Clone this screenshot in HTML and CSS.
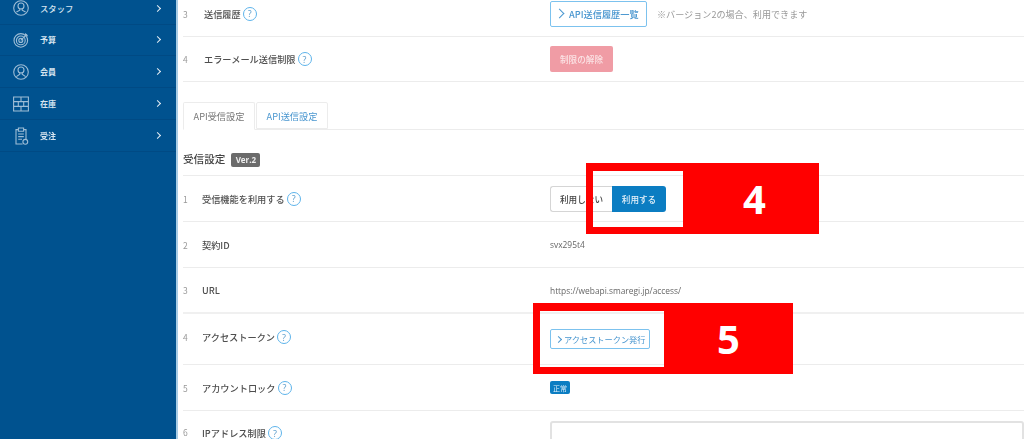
FILE: index.html
```html
<!DOCTYPE html>
<html lang="ja">
<head>
<meta charset="utf-8">
<title>API設定</title>
<link rel="stylesheet" href="styles.css">
</head>
<body>
<div class="page">
  <nav class="sidebar">
    <a class="nav-item nav-first">
      <svg class="nav-icon" viewBox="0 0 16 16"><circle cx="8" cy="8" r="7.3"/><circle cx="8" cy="6" r="3"/><path d="M6.8 8.800v1.400L3.400 12M9.200 8.800v1.400l3.400 1.800"/></svg>
      <span class="nav-text nav-wide">スタッフ</span><span class="nav-arrow"></span>
    </a>
    <a class="nav-item">
      <svg class="nav-icon" viewBox="0 0 16 16"><circle cx="7.800" cy="8.400" r="6.800"/><circle cx="7.800" cy="8.400" r="4.400"/><circle cx="7.800" cy="8.400" r="2"/><path d="M7.800 8.400l6.200-6.200M12.400 1.400l.3 2.200 2.200.3"/></svg>
      <span class="nav-text">予算</span><span class="nav-arrow"></span>
    </a>
    <a class="nav-item">
      <svg class="nav-icon" viewBox="0 0 16 16"><circle cx="8" cy="8" r="7.300"/><circle cx="8" cy="6" r="3"/><path d="M6.800 8.800v1.400L3.400 12.600M9.200 8.800v1.400l3.400 2.400"/></svg>
      <span class="nav-text">会員</span><span class="nav-arrow"></span>
    </a>
    <a class="nav-item">
      <svg class="nav-icon" viewBox="0 0 16 16"><path d="M.6 1h14.800v14H.6zM.6 5.600h14.800M.6 10.400h14.800M8 1v4.600M8 10.400V15M5.300 5.600v4.800M10.700 5.600v4.800"/></svg>
      <span class="nav-text">在庫</span><span class="nav-arrow"></span>
    </a>
    <a class="nav-item">
      <svg class="nav-icon nav-icon-tall" viewBox="0 0 16 18"><path d="M9.600 17H3V2.600h2.400M10.600 2.600H13v9.400M5.400 1h5.200v3.200H5.400zM5.200 7h5.600M5.200 9.600h5.600M5.200 12.200h3.800"/><circle cx="12.300" cy="14.800" r="2.400"/></svg>
      <span class="nav-text">受注</span><span class="nav-arrow"></span>
    </a>
  </nav>

  <main class="main">
    <div class="row row-top">
      <span class="num">3</span>
      <span class="label label-wide">送信履歴<i class="help">?</i></span>
      <div class="value"><a class="btn-link btn-large"><span class="chev"></span>API送信履歴一覧</a><span class="note">※バージョン2の場合、利用できます</span></div>
    </div>
    <div class="row row-44">
      <span class="num">4</span>
      <span class="label label-wide">エラーメール送信制限<i class="help">?</i></span>
      <div class="value"><a class="btn-danger">制限の解除</a></div>
    </div>

    <div class="tabs">
      <a class="tab tab-active">API受信設定</a>
      <a class="tab">API送信設定</a>
    </div>

    <div class="section-head">
      <h2 class="section-title">受信設定</h2><span class="ver">Ver.2</span>
    </div>

    <div class="row">
      <span class="num">1</span>
      <span class="label">受信機能を利用する<i class="help">?</i></span>
      <div class="value">
        <div class="toggle"><a class="toggle-off">利用しない</a><a class="toggle-on">利用する</a></div>
      </div>
    </div>
    <div class="row">
      <span class="num">2</span>
      <span class="label">契約ID</span>
      <div class="value plain">svx295t4</div>
    </div>
    <div class="row row-thick">
      <span class="num">3</span>
      <span class="label">URL</span>
      <div class="value plain">https://webapi.smaregi.jp/access/</div>
    </div>
    <div class="row row-51">
      <span class="num raised">4</span>
      <span class="label raised">アクセストークン<i class="help">?</i></span>
      <div class="value"><a class="btn-link btn-small"><span class="chev chev-small"></span>アクセストークン発行</a></div>
    </div>
    <div class="row">
      <span class="num">5</span>
      <span class="label">アカウントロック<i class="help">?</i></span>
      <div class="value"><span class="badge">正常</span></div>
    </div>
    <div class="row row-last">
      <span class="num lowered">6</span>
      <span class="label lowered">IPアドレス制限<i class="help">?</i></span>
      <div class="value"><div class="textarea"></div></div>
    </div>
  </main>
</div>

<div class="callout callout-4"><div class="callout-frame"></div><div class="callout-tag">4</div></div>
<div class="callout callout-5"><div class="callout-frame"></div><div class="callout-tag">5</div></div>
</body>
</html>
```

FILE: styles.css
```css
* { box-sizing: border-box; }
html, body { margin: 0; height: 100%; overflow: hidden; background: #fff; }
body { font-family: "Noto Sans CJK JP", "Open Sans", sans-serif; color: #555; position: relative; }
.page { display: flex; height: 439px; overflow: hidden; filter: blur(.3px); }

/* sidebar */
.sidebar { width: 178px; flex: none; background: #00528f; border-right: 2px solid #a9cde6; }
.nav-item { display: flex; align-items: center; height: 32px; padding: 0 13px; border-bottom: 1px solid #004a84; color: #d6e4ef; }
.nav-first { height: 25px; padding-bottom: 8px; margin-bottom: -1px; }
.nav-icon { width: 16px; height: 16px; flex: none; fill: none; stroke: #9dbdd6; stroke-width: 1.1; overflow: visible; }
.nav-icon-tall { height: 18px; }
.nav-text { font-size: 8px; font-weight: 700; margin-left: 11px; flex: 1; }
.nav-wide { font-size: 8.400px; font-weight: 500; }
.nav-arrow { width: 5px; height: 5px; border: solid #e4eef5; border-width: 1.500px 1.500px 0 0; transform: rotate(45deg); margin-right: 3px; }

/* rows */
.main { flex: 1; padding-left: 5px; min-width: 0; overflow: hidden; }
.row { display: flex; align-items: center; height: 46px; border-bottom: 1px solid #ececec; }
.row-top { height: 37px; padding-bottom: 9px; }
.row-44 { height: 45px; }
.row-thick { border-bottom-width: 2px; border-bottom-color: #f0f0f0; }
.row-51 { height: 51px; }
.row-last { height: 28px; align-items: flex-start; border: 0; padding-top: 10px; overflow: hidden; }
.num { width: 19px; flex: none; font-size: 8.500px; color: #999; }
.label { width: 348px; flex: none; display: flex; align-items: center; font-size: 9.200px; line-height: 12px; font-weight: 500; color: #4f4f4f; }
.label-wide { padding-left: 2px; }
.raised { margin-top: -4px; }
.lowered { margin-top: 5px; line-height: 12px; }
.help { width: 14px; height: 14px; flex: none; margin-left: 2px; border: 1.300px solid #5db3ea; border-radius: 50%; display: flex; align-items: center; justify-content: center; font-size: 9px; line-height: 1; font-style: normal; font-weight: 400; color: #5a9ccb; font-family: "Open Sans", sans-serif; }
.value { flex: 1; display: flex; align-items: center; min-width: 0; }
.plain { font-size: 8.400px; color: #666; font-family: "Open Sans", sans-serif; }

/* controls */
.btn-link { display: flex; align-items: center; border: 1px solid #7cc2ee; border-radius: 2px; color: #4a97d0; }
.btn-large { width: 97px; height: 26px; padding-left: 5px; font-size: 9.200px; font-weight: 500; }
.btn-small { width: 100px; height: 20px; padding-left: 5px; font-size: 8.200px; }
.chev { width: 7px; height: 7px; border: solid #4a97d0; border-width: 1.200px 1.200px 0 0; transform: rotate(45deg); margin-right: 6px; flex: none; }
.chev-small { width: 5px; height: 5px; margin-right: 3px; }
.note { margin-left: 10px; font-size: 9.100px; color: #999; }
.btn-danger { width: 63px; height: 26px; display: flex; align-items: center; justify-content: center; background: #f09ca5; border-radius: 2px; color: #fbe3e5; font-size: 8.600px; font-weight: 500; }
.toggle { display: flex; height: 26px; font-size: 8.600px; font-weight: 500; }
.toggle a { display: flex; align-items: center; justify-content: center; }
.toggle-off { width: 62px; border: 1px solid #d5d5d5; border-right: 0; border-radius: 3px 0 0 3px; color: #444; }
.toggle-on { width: 54px; background: #0b7dc2; color: #e6f2fa; border-radius: 0 3px 3px 0; }
.badge { width: 20px; height: 13px; border-radius: 2px; background: #0b7dc2; color: #dceefa; font-size: 7px; display: flex; align-items: center; justify-content: center; }
.textarea { width: 100%; height: 40px; border: 2px solid #e2e2e2; border-radius: 3px; }

/* tabs */
.tabs { display: flex; gap: 1px; height: 48px; padding-top: 20px; border-bottom: 1px solid #ececec; }
.tab { width: 72px; display: flex; align-items: center; justify-content: center; border: 1px solid #ececec; border-radius: 2px 2px 0 0; font-size: 9.200px; color: #4a97d0; }
.tab-active { color: #777; border-bottom-color: #fff; height: 28px; }

/* section head */
.section-head { display: flex; align-items: center; height: 46px; padding-top: 16px; padding-bottom: 2px; border-bottom: 1px solid #ececec; }
.section-title { margin: -2px 0 0; font-size: 10.600px; font-weight: 500; color: #444; }
.ver { margin-left: 6px; width: 29px; height: 14px; display: flex; align-items: center; justify-content: center; background: #6b6b6b; border-radius: 2px; color: #eee; font-size: 8px; font-weight: 700; font-family: "Open Sans", sans-serif; }

/* red call-outs over the screenshot */
.callout { position: absolute; display: flex; height: 71px; }
.callout-4 { left: 586px; top: 163px; }
.callout-5 { left: 533px; top: 303px; }
.callout-frame { border: solid #f00; border-width: 8px 7px 7px 7px; }
.callout-4 .callout-frame { width: 104px; }
.callout-5 .callout-frame { width: 131px; border-right: 0; }
.callout-tag { width: 129px; background: #f00; color: #fff; display: flex; align-items: center; justify-content: center; font-family: "Open Sans", sans-serif; font-weight: 700; font-size: 40px; line-height: 1; }
```
